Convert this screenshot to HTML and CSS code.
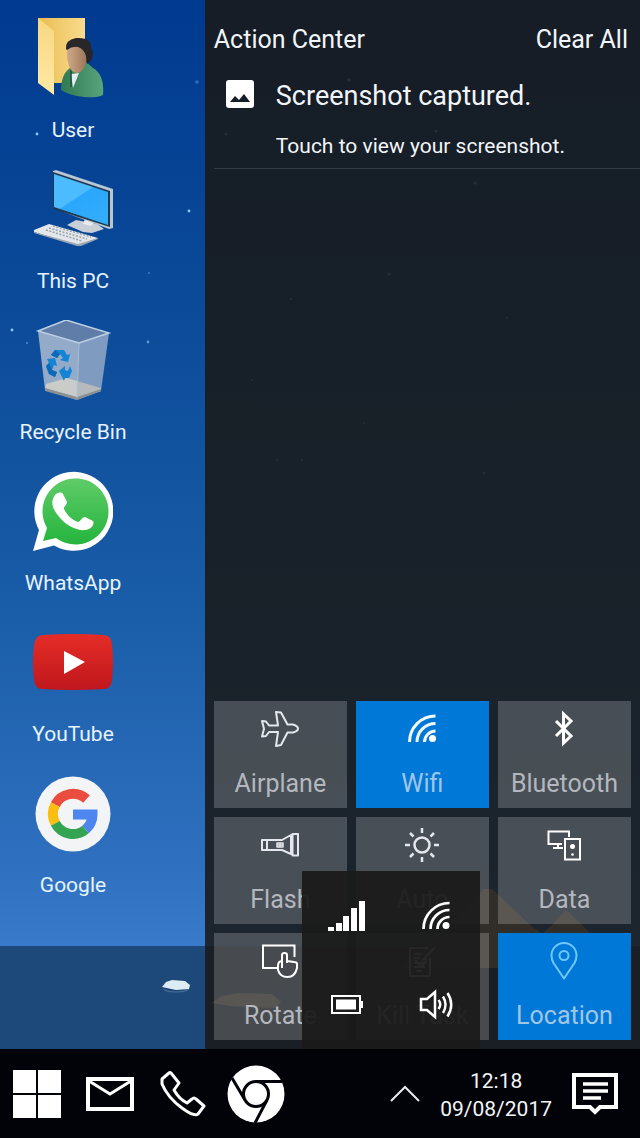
FILE: index.html
```html
<!DOCTYPE html>
<html lang="en">
<head>
<meta charset="utf-8">
<meta name="viewport" content="width=device-width, initial-scale=1">
<title>Desktop</title>
<link rel="stylesheet" href="styles.css">
</head>
<body>
<div class="screen">
  <main class="workspace">
    <svg class="wallpaper" viewBox="0 0 640 1049" preserveAspectRatio="none" aria-hidden="true">
      <defs>
        <linearGradient id="sky" x1="0" y1="0" x2="0" y2="1">
          <stop offset="0" stop-color="#003a90"/>
          <stop offset=".32" stop-color="#0b4a99"/>
          <stop offset=".64" stop-color="#195ca7"/>
          <stop offset=".92" stop-color="#2f71c0"/>
          <stop offset="1" stop-color="#397acb"/>
        </linearGradient>
      </defs>
      <rect width="640" height="946" fill="url(#sky)"/>
      <rect y="946" width="640" height="103" fill="#1c487a"/>
      <path d="M400 968 450 925 484 889 492 889 530 925 542 934 553 924 566 910 578 921 590 933 590 968Z" fill="#dcc0a4"/>
      <path d="M211 1003 222 996 240 993 272 994 281 1002 276 1008 230 1006Z" fill="#c8b4a0"/>
      <path d="M163 989Q176 994 189 989L187 991Q176 994 165 991Z" fill="#506f96"/>
      <path d="M162 987 166 982 172 980 185 981 190 985 189 989 176 990Z" fill="#dcebf4"/>
      <g fill="#8fc6ff">
        <circle cx="37" cy="134" r="1.4"/><circle cx="189" cy="211" r="1.4"/><circle cx="12" cy="330" r="1.4"/>
        <circle cx="148" cy="342" r="1.4" opacity=".6"/><circle cx="197" cy="82" r="1.8" opacity=".35"/>
        <circle cx="27" cy="343" r="1.2" opacity=".4"/><circle cx="149" cy="273" r="1" opacity=".4"/>
        <circle cx="349" cy="80" r="1.8"/><circle cx="226" cy="134" r="1.5"/><circle cx="436" cy="131" r="1.5"/>
        <circle cx="475" cy="183" r="1.5"/><circle cx="389" cy="274" r="1.5"/><circle cx="484" cy="473" r="1.5"/>
        <circle cx="291" cy="299" r="1"/><circle cx="507" cy="318" r="1"/><circle cx="252" cy="380" r="1"/>
        <circle cx="364" cy="423" r="1"/><circle cx="302" cy="460" r="1"/><circle cx="277" cy="460" r="1"/>
      </g>
    </svg>

    <nav class="shortcuts" aria-label="Desktop shortcuts">
      <a class="shortcut" href="#user">
        <svg class="shortcut-icon" viewBox="0 0 80 80" aria-hidden="true">
          <defs>
            <linearGradient id="fold" x1="0" x2="1"><stop offset="0" stop-color="#e9bc52"/><stop offset="1" stop-color="#f9dc8c"/></linearGradient>
            <linearGradient id="flap" x1="0" y1="0" x2="0" y2="1"><stop offset="0" stop-color="#f8d77f"/><stop offset="1" stop-color="#ffe9a6"/></linearGradient>
            <linearGradient id="coat" x1="0" x2="1"><stop offset="0" stop-color="#2f7a53"/><stop offset="1" stop-color="#5aa47c"/></linearGradient>
            <linearGradient id="skin" x1="0" x2="1"><stop offset="0" stop-color="#cfa98a"/><stop offset="1" stop-color="#9a7254"/></linearGradient>
          </defs>
          <path d="M5 0H52V65H5Z" fill="url(#fold)"/>
          <path d="M5 0 21 13V77L5 65Z" fill="url(#flap)"/>
          <path d="M37 50 42 46 53 44 60 50C69 55 71 66 70 77 63 81 40 80 28 72 28 62 31 54 37 50Z" fill="url(#coat)"/>
          <path d="M38 56 46 55 40 70Z" fill="#e4eef0"/>
          <path d="M38 52V69" stroke="#254f40" stroke-width="1.500"/>
          <path d="M34 30C38 25 56 28 55 34L53 44 51 50Q46 58 39 53L36 48 34 40Z" fill="url(#skin)"/>
          <path d="M33 31Q32 22 43 20Q59 19 58 30L60 34Q60 43 54 46L53 38Q51 31 45 29Q39 28 34 32Z" fill="#29262a"/>
        </svg>
        <span class="shortcut-label">User</span>
      </a>
      <a class="shortcut" href="#this-pc">
        <svg class="shortcut-icon" viewBox="0 0 80 80" aria-hidden="true">
          <defs><linearGradient id="scr" x1="0" y1="0" x2=".7" y2="1"><stop offset="0" stop-color="#4abcfc"/><stop offset=".5" stop-color="#4cbcff"/><stop offset=".52" stop-color="#2aa6fb"/><stop offset="1" stop-color="#32adfc"/></linearGradient></defs>
          <path d="M34 56 43 51 64 55 71 60 59 64 50 63Z" fill="#c9cfd6"/>
          <path d="M52 50 62 53 58 57 50 55Z" fill="#e9ebee"/>
          <path d="M20 2 23 1 80 20V59L76 60 20 39Z" fill="#b7c6d4"/>
          <path d="M20 3 77 22V58L20 40Z" fill="#20384e"/>
          <path d="M21 5 75 23V56L21 38Z" fill="url(#scr)"/>
          <path d="M1 61 16 55 65 69 48 76 44 76 1 63Z" fill="#e4e7ea"/>
          <path d="M1 63 45 75 65 69V70L48 77H44L1 64Z" fill="#9ba7b4"/>
          <g stroke="#9aa2ad" stroke-width="1.5" stroke-dasharray="2 1.5"><path d="M20 57 58 68M16 59 54 70M13 61 49 72"/></g>
        </svg>
        <span class="shortcut-label">This PC</span>
      </a>
      <a class="shortcut" href="#recycle-bin">
        <svg class="shortcut-icon" viewBox="0 0 80 80" aria-hidden="true">
          <path d="M5 11 33 0 76 13 46 23Z" fill="#5f7da8"/>
          <path d="M5 11 46 23 44 80 12 70Z" fill="#93aac8"/>
          <path d="M46 23 76 13 68 71 44 80Z" fill="#7f9bc0"/>
          <path d="M13 64 34 58 44 61V79L12 70Z" fill="#c9ccc9"/>
          <path d="M44 61 68 68V71L44 79Z" fill="#b7babc"/>
          <path d="M12 68 44 77 68 69V71L44 80 12 71Z" fill="#8a9094"/>
          <path d="M5 11 33 0 76 13 46 23Z" fill="none" stroke="#bdd0e4" stroke-width="1.5"/>
          <path d="M46 23 44 78" stroke="#adc0d8"/>
          <g fill="#1484d4">
            <path d="M18 35 22 30 31 30 34 35 37 34 35 42 27 40 30 38 27 34 24 38Z"/>
            <path d="M14 39 22 38 24 46 21 45 19 50 24 52 22 57 16 54 13 46 16 43Z"/>
            <path d="M26 51 32 46V50L35 51 37 46 39 51 36 58 32 58 31 61Z"/>
          </g>
          <path d="M22 30 27 34 24 38 18 35ZM16 43 19 50 24 52 22 57 16 54 13 46Z" fill="#0c69b8"/>
        </svg>
        <span class="shortcut-label">Recycle Bin</span>
      </a>
      <a class="shortcut" href="#whatsapp">
        <svg class="shortcut-icon" viewBox="0 0 80 80" aria-hidden="true">
          <defs><linearGradient id="wa" x1="0" y1="0" x2="0" y2="1"><stop offset="0" stop-color="#5fcc68"/><stop offset="1" stop-color="#25b43d"/></linearGradient></defs>
          <path d="M0 80 6 59A39.500 39.500 0 1 1 21 74.500Z" fill="#fff"/>
          <path d="M10 70 14 57A33 33 0 1 1 23 67Z" fill="url(#wa)"/>
          <path d="M22 24C25 21 29 21 30 23L34 31C34 34 30 36 31 38 34 44 39 49 45 51 47 51 49 46 52 46L60 50C62 53 58 59 52 59 45 60 34 55 28 48 19 38 17 31 22 24Z" fill="#fff"/>
        </svg>
        <span class="shortcut-label">WhatsApp</span>
      </a>
      <a class="shortcut" href="#youtube">
        <svg class="shortcut-icon" viewBox="0 0 80 80" aria-hidden="true">
          <defs><linearGradient id="yt" x1="0" y1="0" x2="0" y2="1"><stop offset="0" stop-color="#e52d27"/><stop offset="1" stop-color="#bf171d"/></linearGradient></defs>
          <path d="M9 13Q40 11 71 13Q79 14 79 23Q81 40 79 58Q78 67 71 67Q40 69 9 67Q2 67 1 58Q-1 40 1 23Q2 14 9 13Z" fill="url(#yt)"/>
          <path d="M31 29 52 40 31 52Z" fill="#fff"/>
        </svg>
        <span class="shortcut-label">YouTube</span>
      </a>
      <a class="shortcut" href="#google">
        <svg class="shortcut-icon" viewBox="0 0 80 80" aria-hidden="true">
          <circle cx="40" cy="41" r="37.500" fill="#f3f4f6"/>
          <g fill="none" stroke-width="10">
            <path d="M53.500 26A20 20 0 0 0 22.300 31.600" stroke="#ea4d3e"/>
            <path d="M22.300 31.600A20 20 0 0 0 22.300 50.400" stroke="#fbbd0f"/>
            <path d="M22.300 50.400A20 20 0 0 0 52.600 56.500" stroke="#34a352"/>
            <path d="M52.600 56.500A20 20 0 0 0 59.500 41.500H40" stroke="#4c86ee"/>
          </g>
        </svg>
        <span class="shortcut-label">Google</span>
      </a>
    </nav>

    <section class="action-center" aria-labelledby="ac-title">
      <header class="ac-header">
        <h1 class="ac-title" id="ac-title">Action Center</h1>
        <button class="clear-all" type="button">Clear All</button>
      </header>
      <article class="notification">
        <svg class="notification-icon" viewBox="0 0 28 28" aria-hidden="true">
          <rect width="28" height="28" rx="3" fill="#fff"/>
          <path d="M4 22 9 16 13 20 18 14 24 22Z" fill="#161d27"/>
        </svg>
        <div class="notification-text">
          <h2 class="notification-title">Screenshot captured.</h2>
          <p class="notification-body">Touch to view your screenshot.</p>
        </div>
      </article>

      <div class="tiles">
        <button class="tile" type="button" aria-pressed="false">
          <svg class="glyph" viewBox="0 0 40 40" aria-hidden="true"><path d="M16 3 21 3.500 27.500 15.500H33Q38 17 38 19.700Q38 22 33 23.500H27.500L21 36 16 37 18 23H9L6 27 2 27.500 4 19.700 2 12 6 12.500 9 16.500H18Z"/></svg>
          <span class="tile-label">Airplane</span>
        </button>
        <button class="tile tile-on" type="button" aria-pressed="true">
          <svg class="glyph glyph-bold" viewBox="0 0 40 40" aria-hidden="true"><path d="M7.500 33A26 26 0 0 1 33.500 7M15 33A18.500 18.500 0 0 1 33.500 14.500M22.500 33A11 11 0 0 1 33.500 22"/><circle class="solid" cx="30.500" cy="29.500" r="3.500"/></svg>
          <span class="tile-label">Wifi</span>
        </button>
        <button class="tile" type="button" aria-pressed="false">
          <svg class="glyph glyph-bold glyph-sharp" viewBox="0 0 40 40" aria-hidden="true"><path d="M12 12 27 27 19.500 34V5L27 12 12 27"/></svg>
          <span class="tile-label">Bluetooth</span>
        </button>
        <button class="tile" type="button" aria-pressed="false">
          <svg class="glyph" viewBox="0 0 40 40" aria-hidden="true"><path d="M2 15H22L31 10V29L22 25H2ZM7 15V25M32.500 9H38V30.500H32.500Z"/><path stroke-width="1.500" d="M17 18H23V22H17ZM20 18V22M17 20H23"/></svg>
          <span class="tile-label">Flash</span>
        </button>
        <button class="tile" type="button" aria-pressed="false">
          <svg class="glyph" viewBox="0 0 40 40" aria-hidden="true"><g stroke-width="2.500"><circle cx="20" cy="20" r="7.500"/><path d="M20 3V8M20 32V37M3 20H8M32 20H37M8 8 11.500 11.500M28.500 28.500 32 32M32 8 28.500 11.500M11.500 28.500 8 32"/></g></svg>
          <span class="tile-label">Auto</span>
        </button>
        <button class="tile" type="button" aria-pressed="false">
          <svg class="glyph glyph-sharp" viewBox="0 0 40 40" aria-hidden="true"><path d="M18 19H4.500V6.500H25V12M14 19V23M9 23H19M21 14H36V34.500H21Z"/><circle class="solid" cx="28.500" cy="21.500" r="2.500"/><circle class="solid" cx="28.500" cy="29.500" r="1.300"/></svg>
          <span class="tile-label">Data</span>
        </button>
        <button class="tile" type="button" aria-pressed="false">
          <svg class="glyph glyph-sharp" viewBox="0 0 40 40" aria-hidden="true"><path d="M17 27H3V4.500H34.500V16"/><path stroke-linejoin="round" d="M22 27V14Q22 12 24.500 12T27 14V20M22 20Q18 20 18 25V29Q20 36 27.500 36T37 27V23Q37 21 34 21L27 20V22"/></svg>
          <span class="tile-label">Rotate</span>
        </button>
        <button class="tile" type="button" aria-pressed="false">
          <svg class="glyph" viewBox="0 0 40 40" aria-hidden="true"><path d="M26 7H8V35H28V17M33 6 20 20"/><path d="M12 13H20M12 17H18M12 22H24M12 26H23M14 30H20M13 19 20 26 25 18"/></svg>
          <span class="tile-label">Kill Task</span>
        </button>
        <button class="tile tile-on" type="button" aria-pressed="true">
          <svg class="glyph glyph-blue" viewBox="0 0 40 40" aria-hidden="true"><path d="M20 37.500 9.500 22Q7.500 18.500 7.500 14.500A12.500 12.500 0 0 1 32.500 14.500Q32.500 18.500 30.500 22Z"/><circle cx="20" cy="14.500" r="4.500"/></svg>
          <span class="tile-label">Location</span>
        </button>
      </div>
    </section>

    <div class="tray" role="group" aria-label="System tray">
      <button class="tray-button" type="button" aria-label="Mobile signal">
        <svg class="glyph" viewBox="0 0 40 40" aria-hidden="true"><path class="block" d="M1 31H7V35H1ZM9 27H15V35H9ZM16 20H22V35H16ZM24 12H30V35H24ZM32 5H38V35H32Z"/></svg>
      </button>
      <button class="tray-button" type="button" aria-label="Wifi">
        <svg class="glyph" viewBox="0 0 40 40" aria-hidden="true"><g stroke-width="2.700"><path d="M7.500 33A26 26 0 0 1 33.500 7M14.500 33A19 19 0 0 1 33.500 14M21.500 33A12 12 0 0 1 33.500 21"/></g><circle class="solid" cx="30" cy="29.500" r="3.500"/></svg>
      </button>
      <button class="tray-button" type="button" aria-label="Battery">
        <svg class="glyph glyph-sharp" viewBox="0 0 40 40" aria-hidden="true"><path d="M5 11H33V28H5Z"/><path class="block" d="M9 14.500H29V24.500H9ZM34 16H36V23H34Z"/></svg>
      </button>
      <button class="tray-button" type="button" aria-label="Volume">
        <svg class="glyph glyph-sharp" viewBox="0 0 40 40" aria-hidden="true"><g stroke-width="2.500"><path d="M5 14H11L19 7V32L11 25H5ZM22.500 15Q26 19.500 22.500 24M27 11.500Q32 19.500 27 28M31.500 8Q39 19.500 31.500 31.500"/></g></svg>
      </button>
    </div>
  </main>

  <footer class="taskbar">
    <button class="task" type="button" aria-label="Start">
      <svg width="48" height="48" viewBox="0 0 48 48" aria-hidden="true"><path fill="#fff" d="M0 0H23V23H0ZM25 0H48V23H25ZM0 25H23V48H0ZM25 25H48V48H25Z"/></svg>
    </button>
    <button class="task task-wide" type="button" aria-label="Mail">
      <svg width="50" height="36" viewBox="0 0 50 36" fill="none" stroke="#fff" stroke-width="4" aria-hidden="true"><path d="M3 3H47V33H3Z"/><path stroke-width="3" d="M4 5 25 18 46 5"/></svg>
    </button>
    <button class="task" type="button" aria-label="Phone">
      <svg width="48" height="48" viewBox="0 0 48 48" fill="none" stroke="#fff" stroke-width="3" stroke-linejoin="round" aria-hidden="true"><path d="M3 9 10 3Q11 2 12 3L20 13 15 20Q20 29 28 33L33 29Q35 27 37 29L45 36 39 44Q35 47 23 38Q9 28 3 14Z"/></svg>
    </button>
    <button class="task task-wide" type="button" aria-label="Chrome">
      <svg width="58" height="58" viewBox="0 0 58 58" aria-hidden="true"><circle cx="29" cy="29" r="28.500" fill="#fff"/><g fill="none" stroke="#020308" stroke-width="3"><path d="M29 16.500H55M18 35 5 13M40 35 28 58"/><circle cx="29" cy="29" r="12.500" fill="#fff"/></g></svg>
    </button>
    <div class="status">
      <button class="task-small" type="button" aria-label="Hide tray icons">
        <svg width="30" height="18" viewBox="0 0 30 18" fill="none" stroke="#e8eaee" stroke-width="2" aria-hidden="true"><path d="M1 16 15 2 29 16"/></svg>
      </button>
      <time class="clock" datetime="2017-08-09T12:18"><span>12:18</span><span>09/08/2017</span></time>
      <button class="task-small" type="button" aria-label="Notifications">
        <svg width="46" height="42" viewBox="0 0 46 42" fill="none" stroke="#fff" aria-hidden="true"><path stroke-width="4" d="M2 2H44V34H28L23 39 18 34H2Z"/><path stroke-width="3.500" d="M11 11H36M11 18H36M11 25H29"/></svg>
      </button>
    </div>
  </footer>
</div>
</body>
</html>
```
FILE: styles.css
```css
* {
  box-sizing: border-box;
}

body {
  margin: 0;
  background: #020308;
  color: #f2f5f8;
  font-family: Roboto, "Liberation Sans", sans-serif;
}

button {
  padding: 0;
  border: 0;
  background: none;
  color: inherit;
  font: inherit;
  cursor: pointer;
}

h1,
h2,
p {
  margin: 0;
  font-weight: 400;
}

svg {
  display: block;
}

.screen {
  display: flex;
  flex-direction: column;
  min-height: 100vh;
}

.workspace {
  position: relative;
  display: flex;
  flex: 1;
}

.wallpaper {
  position: absolute;
  inset: 0;
  width: 100%;
  height: 100%;
}

/* Desktop shortcuts */
.shortcuts {
  position: relative;
  display: flex;
  flex: 1 1 32%;
  flex-direction: column;
  align-items: flex-start;
  gap: 25px;
  padding: 18px 0;
}

.shortcut {
  display: flex;
  flex-direction: column;
  align-items: center;
  gap: 18px;
  width: 146px;
  color: #e6f3ff;
  text-decoration: none;
}

.shortcut-icon {
  width: 80px;
  height: 80px;
}

.shortcut-label {
  font-size: 21px;
  line-height: 28px;
}

/* Action center */
.action-center {
  position: relative;
  display: flex;
  flex: 1 1 68%;
  flex-direction: column;
  padding: 24px 0 9px 9px;
  background: rgba(25, 25, 24, 0.88);
}

.ac-header {
  display: flex;
  justify-content: space-between;
  padding-right: 12px;
}

.ac-title,
.clear-all {
  font-size: 25px;
  line-height: 32px;
}

.notification {
  display: flex;
  gap: 22px;
  padding: 24px 12px 8px;
  border-bottom: 1px solid #343b45;
}

.notification-icon {
  width: 28px;
  height: 28px;
}

.notification-title {
  font-size: 27px;
  line-height: 32px;
}

.notification-body {
  padding-top: 20px;
  font-size: 21px;
  line-height: 28px;
}

.tiles {
  display: grid;
  grid-template-columns: repeat(3, 1fr);
  gap: 9px;
  margin-top: auto;
  padding-right: 9px;
}

.tile {
  display: flex;
  flex-direction: column;
  align-items: center;
  gap: 19px;
  padding: 8px 0;
  background: rgba(255, 255, 255, 0.2);
  color: #b4b8be;
}

.tile-on {
  background: #0078d7;
  color: #a0c6e6;
}

.tile-label {
  font-size: 25px;
  line-height: 32px;
}

.glyph {
  width: 40px;
  height: 40px;
  fill: none;
  stroke: #e4e8ec;
  stroke-width: 2;
  stroke-linejoin: round;
}

.glyph-bold {
  stroke: #f2f8fc;
  stroke-width: 3;
}

.glyph-sharp {
  stroke: #ffffff;
  stroke-linejoin: miter;
}

.glyph-blue {
  stroke: #70c8ff;
}

.solid,
.block {
  fill: #ffffff;
  stroke: none;
}

/* System tray popup, opened above the taskbar */
.tray {
  position: absolute;
  right: 25%;
  bottom: 0;
  display: grid;
  grid-template-columns: repeat(2, 89px);
  grid-auto-rows: 89px;
  background: rgba(27, 27, 27, 0.94);
}

.tray-button {
  display: grid;
  place-items: center;
}

.tray .glyph {
  stroke: #ffffff;
}

/* Taskbar */
.taskbar {
  display: flex;
  align-items: center;
  gap: 20px;
  padding: 16px 22px 15px 13px;
  background: #020308;
}

.task {
  display: grid;
  place-items: center;
  width: 48px;
  height: 58px;
}

.task-wide {
  width: 58px;
}

.status {
  display: flex;
  align-items: center;
  gap: 20px;
  margin-left: auto;
}

.clock {
  display: flex;
  flex-direction: column;
  align-items: center;
  padding-top: 2px;
  font-size: 21px;
  line-height: 28px;
}
```
